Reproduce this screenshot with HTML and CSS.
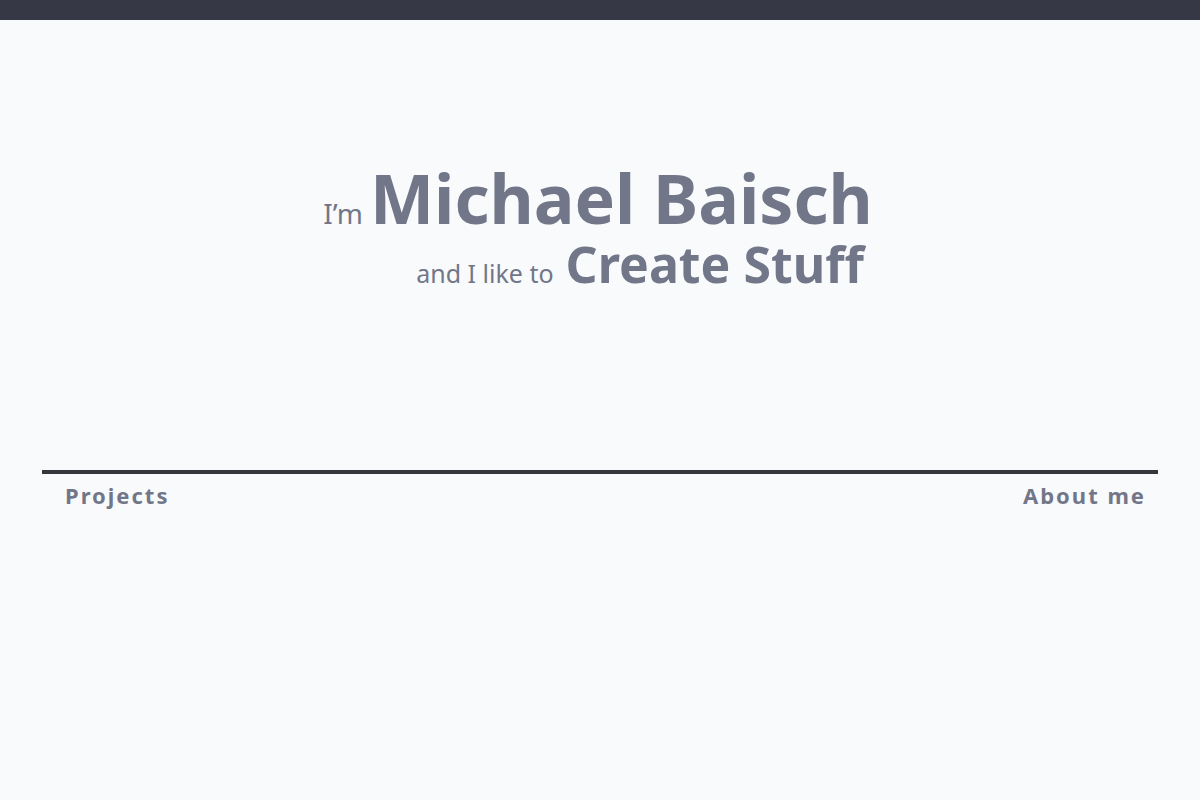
FILE: index.html
```html
<!DOCTYPE html>
<html lang="en">
<head>
<meta charset="utf-8">
<title>Michael Baisch</title>
<link rel="stylesheet" href="styles.css">
</head>
<body>
  <div class="topbar"></div>
  <main class="page">
    <header class="hero">
      <h1 class="line line-name">
        <span class="small">I’m</span>
        <span class="big">Michael Baisch</span>
      </h1>
      <p class="line line-tag">
        <span class="small">and I like to</span>
        <span class="mid">Create Stuff</span>
      </p>
    </header>
    <nav class="nav">
      <a class="nav-link" href="#projects">Projects</a>
      <a class="nav-link" href="#about">About me</a>
    </nav>
  </main>
</body>
</html>
```

FILE: styles.css
```css
html, body {
  margin: 0;
  padding: 0;
}

body {
  background: #f9fafb;
  color: #717789;
  font-family: "Noto Sans", "Open Sans", sans-serif;
  min-height: 800px;
}

.topbar {
  height: 20px;
  background: #363845;
}

.page {
  padding: 0 42px;
}

/* Headline block sits in the upper area above the nav rule */
.hero {
  display: flex;
  flex-direction: column;
  align-items: center;
  padding-top: 144px;
  height: 450px;
  box-sizing: border-box;
}

/* Each headline row: a small lead-in followed by the large words */
.line {
  display: flex;
  align-items: baseline;
  margin: 0;
  font-size: 16px;
  font-weight: 400;
  line-height: 1;
  white-space: nowrap;
}

.line-name {
  gap: 7px;
  margin-left: -4px;
}

.line-tag {
  gap: 12px;
  margin-left: 80px;
  margin-top: 7px;
}

.small {
  font-size: 28px;
  font-weight: 400;
}

.line-tag .small {
  font-size: 25px;
}

.big {
  font-size: 68px;
  font-weight: 700;
}

.mid {
  font-size: 50px;
  font-weight: 700;
}

.nav {
  display: flex;
  justify-content: space-between;
  border-top: 4px solid #35363b;
  padding: 6px 12px 0 23px;
}

.nav-link {
  color: #717789;
  text-decoration: none;
  font-weight: 700;
  font-size: 22px;
  letter-spacing: 2px;
}
```
